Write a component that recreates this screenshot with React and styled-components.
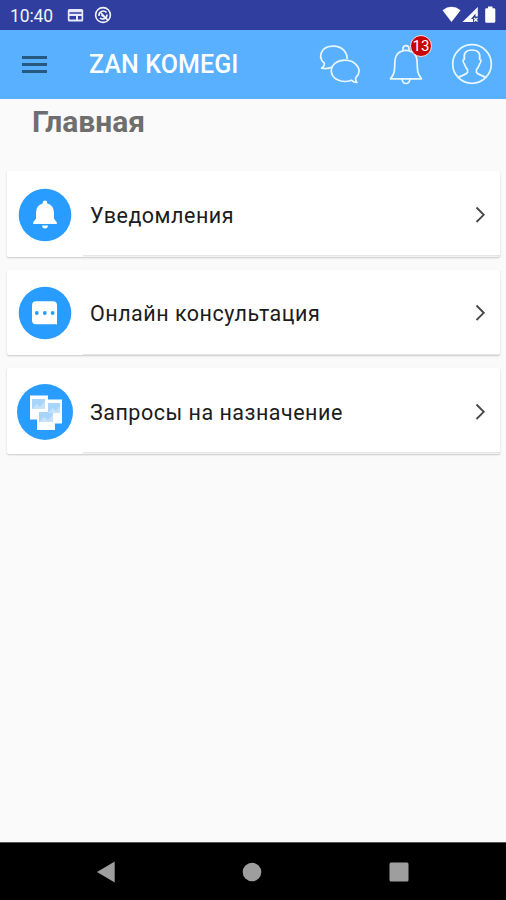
import React from 'react';
import styled, { createGlobalStyle } from 'styled-components';

const GlobalStyle = createGlobalStyle`
  * {
    box-sizing: border-box;
  }
  body {
    margin: 0;
    background: #fafafa;
    font-family: Roboto, 'Liberation Sans', sans-serif;
  }
  svg {
    display: block;
    flex: none;
  }
`;

const Screen = styled.div`
  display: flex;
  flex-direction: column;
  width: 506px;
  height: 900px;
  overflow: hidden;
  background: #fafafa;
`;

const StatusBar = styled.header`
  display: flex;
  align-items: center;
  height: 30px;
  padding: 0 8px 0 10px;
  background: #303f9f;
  color: #fff;
`;

const Clock = styled.span`
  width: 56px;
  padding-top: 2px;
  font-size: 17.5px;
  line-height: 20px;
  letter-spacing: -0.1px;
  color: #f1f2fb;
`;

const StatusIcons = styled.div`
  display: flex;
  margin-left: ${(props) => (props.$right ? 'auto' : '0')};
`;

const AppBar = styled.div`
  display: flex;
  align-items: center;
  height: 68.5px;
  padding: 0 13px 0 22px;
  background: #58b0ff;
`;

const MenuButton = styled.button`
  display: flex;
  flex-direction: column;
  gap: 4px;
  width: 25px;
  margin: 0 42px 0 0;
  padding: 0;
  border: none;
  background: none;
`;

const MenuLine = styled.span`
  height: 3px;
  background: #27587f;
`;

const AppName = styled.h1`
  flex: 1;
  margin: 2px 0 0;
  font-size: 25px;
  line-height: 30px;
  font-weight: 500;
  letter-spacing: 0.1px;
  white-space: nowrap;
  color: #fff;
`;

const Actions = styled.div`
  display: flex;
  align-items: center;
  gap: 28px;
`;

const ActionButton = styled.button`
  position: relative;
  padding: 0;
  border: none;
  background: none;
`;

const Badge = styled.span`
  position: absolute;
  top: -8px;
  right: -9px;
  display: flex;
  align-items: center;
  justify-content: center;
  width: 22px;
  height: 22px;
  border: 1.5px solid #f3dde3;
  border-radius: 50%;
  background: #c90404;
  font-family: Roboto, sans-serif;
  font-size: 15px;
  line-height: 18px;
  color: #fff;
`;

const PageTitle = styled.h2`
  margin: 4px 0 30.5px 32px;
  font-size: 30px;
  line-height: 38px;
  font-weight: 700;
  color: #6e6e6e;
`;

const Menu = styled.main`
  display: flex;
  flex-direction: column;
  flex: 1;
  gap: 13px;
  padding: 0 6px 0 7px;
`;

const Card = styled.a`
  display: flex;
  align-items: center;
  height: 85.5px;
  padding: 2px 13px 0 10px;
  border-radius: 2px;
  background: linear-gradient(#e6e6e6, #e6e6e6) 76px 100% / 100% 1.5px no-repeat, #fff;
  box-shadow: 0 1px 2px rgba(0, 0, 0, 0.2);
`;

const CardLabel = styled.span`
  flex: 1;
  margin: 2px 0 0 17px;
  font-size: 21.5px;
  line-height: 28px;
  letter-spacing: 0.5px;
  color: #1c1c1c;
`;

const NavBar = styled.nav`
  display: flex;
  align-items: center;
  justify-content: space-between;
  height: 58px;
  padding: 0 97px 0 96px;
  border-top: 1px solid #555;
  background: #000;
`;

const NewsIcon = () => (
  <svg width="18" height="16" viewBox="0 0 18 16">
    <rect x="1.8" y="2" width="15.4" height="12.5" rx="1.5" fill="#e8eafa" />
    <path d="M3.5 6H15.5M3.5 9H10V12.5H3.5ZM12 9H15.5V12.5H12Z" fill="#303f9f" />
    <path d="M3.5 6H15.5" stroke="#303f9f" strokeWidth="1.5" />
  </svg>
);

const SyncIcon = () => (
  <svg width="18" height="18" viewBox="0 0 18 18" fill="none" stroke="#f1f2fb">
    <circle cx="9" cy="9" r="7.4" strokeWidth="1.6" />
    <path d="M5 10A4.3 4.3 0 0 1 12.5 6.6M13 8.5A4.3 4.3 0 0 1 6 12" strokeWidth="1.6" />
    <path d="M7 7L14 14.4M7.5 9L10.5 11" strokeWidth="1.8" />
  </svg>
);

const WifiIcon = () => (
  <svg width="20" height="18" viewBox="0 0 20 18">
    <path d="M0.5 4.3Q9.5 -2.6 18.6 4.3L9.5 16Z" fill="#fff" />
  </svg>
);

const SignalIcon = () => (
  <svg width="18" height="18" viewBox="0 0 18 18">
    <path d="M0.5 16L15.8 1V10.5H11V16Z" fill="#fff" />
    <path d="M9 13L13.5 7.5V11H11V13Z" fill="#303f9f" />
    <path d="M12 12L15.5 15.5M15.5 12L12 15.5" stroke="#fff" strokeWidth="1.3" />
  </svg>
);

const BatteryIcon = () => (
  <svg width="18" height="18" viewBox="0 0 18 18">
    <path d="M8 0.5H12.5V2.2H14Q15.3 2.2 15.3 3.5V15.5Q15.3 16.7 14 16.7H6.5Q5.2 16.7 5.2 15.5V3.5Q5.2 2.2 6.5 2.2H8Z" fill="#fff" />
  </svg>
);

const ChatsIcon = () => (
  <svg width="42" height="42" viewBox="0 0 42 42" fill="none" stroke="#e9f7ff" strokeWidth="1.7" strokeLinejoin="round">
    <path d="M13.3 24Q8.5 26.3 2.6 25.2Q5.8 23 5.3 20.2C-1.2 14.5 1 3.2 14.5 3.2C23 3.2 28 9 28.2 16" />
    <path d="M36.8 34.7C45 26.5 36 17.2 25.8 17.2C18.5 17.2 12.3 21.5 12.3 27.8C12.3 35.5 22 41 32.4 37.2Q34.8 39.6 38 39.5Q36.2 37.5 36.8 34.7Z" />
  </svg>
);

const BellIcon = () => (
  <svg width="34" height="42" viewBox="0 0 34 42" fill="none" stroke="#e9f7ff" strokeWidth="1.7" strokeLinejoin="round">
    <path d="M14 7.7V5.5Q14 2.7 17 2.7Q20 2.7 20 5.5V7.7" />
    <path d="M14 7.8Q6.6 9.5 6 17C5.4 28.5 6 30 1.5 35.8H32.5C28 30 28.6 28.5 28 17Q27.4 9.5 20 7.8Q17 7 14 7.8Z" />
    <path d="M13 36Q13.5 40.5 17 40.5Q20.5 40.5 21 36" />
  </svg>
);

const ProfileIcon = () => (
  <svg width="42" height="42" viewBox="0 0 42 42" fill="none" stroke="#e9f7ff" strokeWidth="1.7" strokeLinejoin="round">
    <circle cx="21" cy="21" r="19.3" />
    <path d="M7.5 34.7C10.5 32 15 32 16.5 29.5V26.5C14 24.5 14 22 13.3 20.7Q11.6 19.5 12.2 17L13.4 16.2C12.3 10 15 7 21 7C27 7 29.7 10 28.6 16.2L29.8 17Q30.4 19.5 28.7 20.7C28 22 28 24.5 25.5 26.5V29.5C27 32 31.5 32 34.5 34.7" />
  </svg>
);

const CardBellIcon = () => (
  <svg width="56" height="56" viewBox="0 0 56 56">
    <circle cx="28" cy="28" r="26.3" fill="#299dff" />
    <path d="M16.2 37V35.3L19 31.8V26Q19 18.3 25.7 16.6V15.7Q25.7 13.5 28 13.5Q30.3 13.5 30.3 15.7V16.6Q37 18.3 37 26V31.8L39.8 35.3V37ZM25 38.5H31Q30.8 41.5 28 41.5Q25.2 41.5 25 38.5Z" fill="#fff" />
  </svg>
);

const CardChatIcon = () => (
  <svg width="56" height="56" viewBox="0 0 56 56">
    <circle cx="28" cy="28" r="26.3" fill="#299dff" />
    <path d="M19 16.2H36Q40 16.2 40 20.2V39.6L37.3 39Q36.6 39.3 35.5 39.3H19Q15 39.3 15 35.3V20.2Q15 16.2 19 16.2Z" fill="#fff" />
    <g fill="#299dff">
      <circle cx="19.8" cy="28" r="1.9" />
      <circle cx="27.8" cy="28" r="1.9" />
      <circle cx="35.6" cy="28" r="1.9" />
    </g>
  </svg>
);

const CardDocsIcon = () => (
  <svg width="56" height="56" viewBox="0 0 56 56">
    <circle cx="28" cy="28" r="28" fill="#299dff" />
    <g fill="#fff">
      <path d="M13 11.5H31V35.5H13Z" />
      <path d="M29 15.5H45V39.5H29Z" />
      <path d="M20 23H38V46H20Z" />
    </g>
    <path d="M15 15H28V25H15ZM31 19H43V29H31ZM22 28H36V38H22Z" fill="#a9d4fa" />
    <path d="M15 25L20 20L23 23L28 17V25ZM31 29L36 24L39 27L43 22V29ZM22 38L27 33L31 36L36 31V38Z" fill="#c5e2fa" />
  </svg>
);

const Chevron = () => (
  <svg width="12" height="18" viewBox="0 0 12 18" fill="none" stroke="#484848" strokeWidth="1.9">
    <path d="M1.5 1.5L8.7 8.8L1.5 16" />
  </svg>
);

const items = [
  { label: 'Уведомления', Icon: CardBellIcon },
  { label: 'Онлайн консультация', Icon: CardChatIcon },
  { label: 'Запросы на назначение', Icon: CardDocsIcon },
];

const App = () => {
  return (
    <>
      <GlobalStyle />
      <Screen>
        <StatusBar>
          <Clock>10:40</Clock>
          <StatusIcons>
            <NewsIcon />
          </StatusIcons>
          <StatusIcons style={undefined}>
            <svg width="10" height="1" />
            <SyncIcon />
          </StatusIcons>
          <StatusIcons $right>
            <WifiIcon />
            <SignalIcon />
            <BatteryIcon />
          </StatusIcons>
        </StatusBar>
        <AppBar>
          <MenuButton>
            <MenuLine />
            <MenuLine />
            <MenuLine />
          </MenuButton>
          <AppName>ZAN KOMEGI</AppName>
          <Actions>
            <ActionButton>
              <ChatsIcon />
            </ActionButton>
            <ActionButton>
              <BellIcon />
              <Badge>13</Badge>
            </ActionButton>
            <ActionButton>
              <ProfileIcon />
            </ActionButton>
          </Actions>
        </AppBar>
        <PageTitle>Главная</PageTitle>
        <Menu>
          {items.map(({ label, Icon }) => (
            <Card key={label}>
              <Icon />
              <CardLabel>{label}</CardLabel>
              <Chevron />
            </Card>
          ))}
        </Menu>
        <NavBar>
          <svg width="19" height="22" viewBox="0 0 19 22">
            <path d="M1 11L18.7 0.5V21.5Z" fill="#9e9e9e" />
          </svg>
          <svg width="20" height="20" viewBox="0 0 20 20">
            <circle cx="10" cy="10" r="9.3" fill="#9e9e9e" />
          </svg>
          <svg width="20" height="20" viewBox="0 0 20 20">
            <rect x="0.5" y="0.5" width="19" height="19" rx="1.5" fill="#9e9e9e" />
          </svg>
        </NavBar>
      </Screen>
    </>
  );
};

export default App;
